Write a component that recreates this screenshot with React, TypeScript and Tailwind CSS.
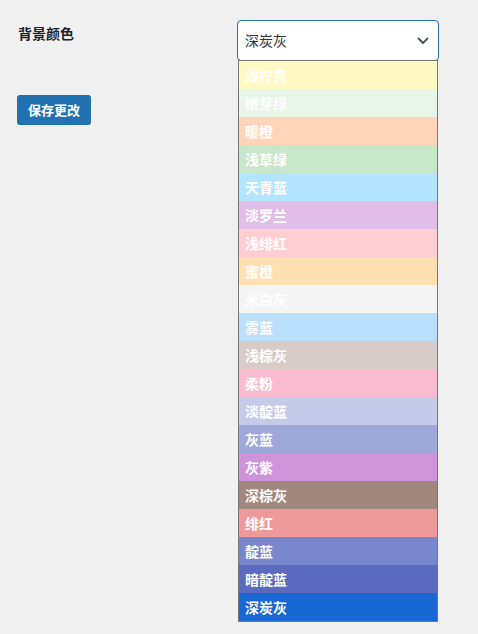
import React from "react";

const options: { label: string; bg: string }[] = [
  { label: "浅柠黄", bg: "bg-[#fff9c4]" },
  { label: "嫩芽绿", bg: "bg-[#e8f5e9]" },
  { label: "暖橙", bg: "bg-[#ffd5b9]" },
  { label: "浅草绿", bg: "bg-[#c8e6c9]" },
  { label: "天青蓝", bg: "bg-[#b3e5fc]" },
  { label: "淡罗兰", bg: "bg-[#e1bee7]" },
  { label: "浅绯红", bg: "bg-[#ffcdd2]" },
  { label: "蜜橙", bg: "bg-[#ffe0b2]" },
  { label: "米白灰", bg: "bg-[#f5f5f5]" },
  { label: "雾蓝", bg: "bg-[#bbdefb]" },
  { label: "浅棕灰", bg: "bg-[#d7ccc8]" },
  { label: "柔粉", bg: "bg-[#f8bbd0]" },
  { label: "淡靛蓝", bg: "bg-[#c5cae9]" },
  { label: "灰蓝", bg: "bg-[#9fa8da]" },
  { label: "灰紫", bg: "bg-[#ce93d8]" },
  { label: "深棕灰", bg: "bg-[#a1887f]" },
  { label: "绯红", bg: "bg-[#ef9a9a]" },
  { label: "靛蓝", bg: "bg-[#7986cb]" },
  { label: "暗靛蓝", bg: "bg-[#5c6bc0]" },
  { label: "深炭灰", bg: "bg-[#1967d2]" },
];

export default function App() {
  return (
    <div className="min-h-[634px] bg-[#f0f0f1] font-['Noto_Sans_CJK_SC',sans-serif] text-[#1d2327]">
      {/* Setting row */}
      <div className="flex pt-5 pl-[18px]">
        <div className="w-[219px] pt-[4px] text-[14px] font-bold leading-[18px]">背景颜色</div>
        <div className="relative">
          <div className="flex h-[41px] w-[202px] items-center justify-between rounded-[4px] border border-[#2271b1] bg-white pl-[7px] pr-[9px] text-[14px] text-[#2c3338]">
            <span>深炭灰</span>
            <svg width="12" height="7" viewBox="0 0 12 7" fill="none">
              <path d="M1 1l5 5 5-5" stroke="#50575e" strokeWidth="2" />
            </svg>
          </div>
          {/* Open list */}
          <div className="absolute left-[1px] top-[40px] z-10 w-[200px] border border-[#767676] bg-white">
            {options.map((o) => (
              <div
                key={o.label}
                className={`flex h-[28px] items-center pl-[6px] text-[14px] font-bold text-white ${o.bg}`}
              >
                {o.label}
              </div>
            ))}
          </div>
        </div>
      </div>

      <div className="pl-[17px] pt-[34px]">
        <button className="h-[30px] rounded-[3px] bg-[#2271b1] px-[11px] text-[13px] font-bold text-white">
          保存更改
        </button>
      </div>
    </div>
  );
}
